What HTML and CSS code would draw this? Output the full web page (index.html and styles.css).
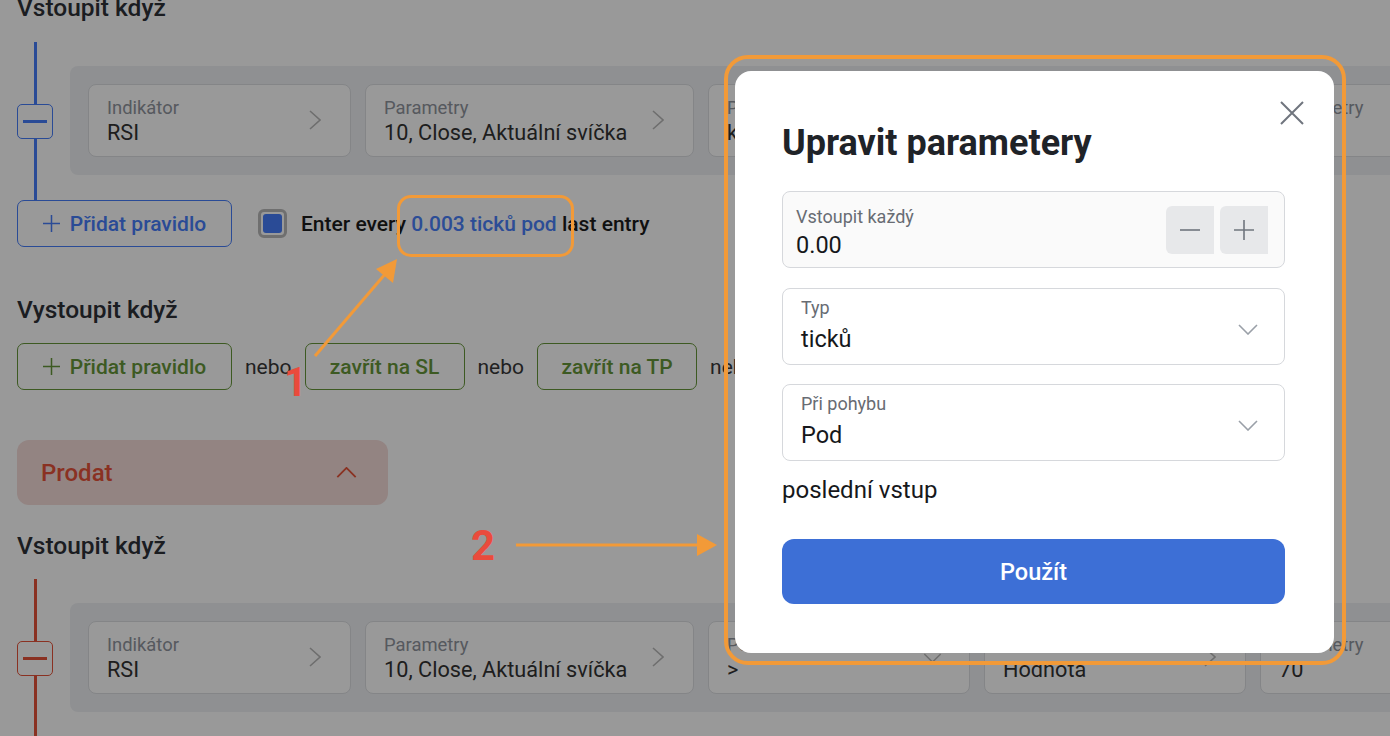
FILE: index.html
```html
<!DOCTYPE html>
<html lang="cs">
<head>
<meta charset="utf-8">
<title>Upravit parametery</title>
<link rel="stylesheet" href="styles.css">
</head>
<body>
<main class="page">
  <h2 class="heading heading--first">Vstoupit když</h2>
  <div class="tree tree--buy">
    <div class="rail"><span class="rail-line"></span><span class="rail-toggle"><span class="rail-minus"></span></span><span class="rail-line"></span></div>
    <div class="rule-wrap">
      <div class="rule-card">
        <div class="field-box field-box--w263"><div class="field-text"><span class="field-label">Indikátor</span><span class="field-value">RSI</span></div><svg class="chev-r" viewBox="0 0 12 20"><path d="M1 1l10 9-10 9"/></svg></div>
        <div class="field-box field-box--w329"><div class="field-text"><span class="field-label">Parametry</span><span class="field-value">10, Close, Aktuální svíčka</span></div><svg class="chev-r" viewBox="0 0 12 20"><path d="M1 1l10 9-10 9"/></svg></div>
        <div class="field-box field-box--w262"><div class="field-text"><span class="field-label">Porovnání</span><span class="field-value">kříží dolů</span></div><svg class="chev-d" viewBox="0 0 20 11"><path d="M1 1l9 9 9-9"/></svg></div>
        <div class="field-box field-box--w262"><div class="field-text"><span class="field-label">Porovnat s</span><span class="field-value">Hodnota</span></div><svg class="chev-r" viewBox="0 0 12 20"><path d="M1 1l10 9-10 9"/></svg></div>
        <div class="field-box field-box--w262"><div class="field-text"><span class="field-label">Parametry</span><span class="field-value">30</span></div><svg class="chev-r" viewBox="0 0 12 20"><path d="M1 1l10 9-10 9"/></svg></div>
      </div>
    </div>
  </div>
  <div class="add-row">
    <button class="add-btn add-btn--blue"><svg class="plus" viewBox="0 0 18 18"><path d="M9 0v18M0 9h18"/></svg>Přidat pravidlo</button>
    <div class="check">
      <span class="check-box"><span class="check-fill"></span></span>
      <span class="check-text">Enter every <span class="check-link">0.003 ticků pod</span> last entry</span>
    </div>
  </div>

  <h2 class="heading heading--exit">Vystoupit když</h2>
  <div class="exit-row">
    <button class="add-btn add-btn--green"><svg class="plus" viewBox="0 0 18 18"><path d="M9 0v18M0 9h18"/></svg>Přidat pravidlo</button>
    <span class="or">nebo</span>
    <button class="close-btn">zavřít na SL</button>
    <span class="or">nebo</span>
    <button class="close-btn">zavřít na TP</button>
    <span class="or">nebo</span>
  </div>

  <div class="side-bar"><span>Prodat</span><svg class="chev-u" viewBox="0 0 22 12"><path d="M1 11l10-10 10 10"/></svg></div>

  <h2 class="heading heading--sell">Vstoupit když</h2>
  <div class="tree tree--sell">
    <div class="rail"><span class="rail-line"></span><span class="rail-toggle"><span class="rail-minus"></span></span><span class="rail-line"></span></div>
    <div class="rule-wrap">
      <div class="rule-card">
        <div class="field-box field-box--w263"><div class="field-text"><span class="field-label">Indikátor</span><span class="field-value">RSI</span></div><svg class="chev-r" viewBox="0 0 12 20"><path d="M1 1l10 9-10 9"/></svg></div>
        <div class="field-box field-box--w329"><div class="field-text"><span class="field-label">Parametry</span><span class="field-value">10, Close, Aktuální svíčka</span></div><svg class="chev-r" viewBox="0 0 12 20"><path d="M1 1l10 9-10 9"/></svg></div>
        <div class="field-box field-box--w262"><div class="field-text"><span class="field-label">Porovnání</span><span class="field-value">&gt;</span></div><svg class="chev-d" viewBox="0 0 20 11"><path d="M1 1l9 9 9-9"/></svg></div>
        <div class="field-box field-box--w262"><div class="field-text"><span class="field-label">Porovnat s</span><span class="field-value">Hodnota</span></div><svg class="chev-r" viewBox="0 0 12 20"><path d="M1 1l10 9-10 9"/></svg></div>
        <div class="field-box field-box--w262"><div class="field-text"><span class="field-label">Parametry</span><span class="field-value">70</span></div><svg class="chev-r" viewBox="0 0 12 20"><path d="M1 1l10 9-10 9"/></svg></div>
      </div>
    </div>
  </div>
</main>

<div class="backdrop"></div>

<div class="annotations">
  <div class="highlight"></div>
  <svg class="arrows" viewBox="0 0 1390 736">
    <line x1="315" y1="356" x2="386" y2="273"/>
    <polygon points="397,259 376,269 393,283"/>
    <line x1="516" y1="545" x2="700" y2="545"/>
    <polygon points="697,534 717,545 697,556"/>
  </svg>
  <span class="step step--one">1</span>
  <span class="step step--two">2</span>
  <div class="modal-frame"></div>
</div>

<section class="modal">
  <svg class="modal-close" viewBox="0 0 24 24"><path d="M1 1l22 22M23 1L1 23"/></svg>
  <h1 class="modal-title">Upravit parametery</h1>
  <div class="mfield mfield--number">
    <div class="mfield-text mfield-text--number">
      <span class="mfield-label">Vstoupit každý</span>
      <span class="mfield-value">0.00</span>
    </div>
    <div class="stepper">
      <span class="step-btn"><svg viewBox="0 0 20 20"><path d="M0 10h20"/></svg></span>
      <span class="step-btn"><svg viewBox="0 0 20 20"><path d="M0 10h20M10 0v20"/></svg></span>
    </div>
  </div>
  <div class="mfield mfield--select mfield--gap20">
    <div class="mfield-text mfield-text--select">
      <span class="mfield-label">Typ</span>
      <span class="mfield-value">ticků</span>
    </div>
    <svg class="mchev" viewBox="0 0 20 11"><path d="M1 1l9 9 9-9"/></svg>
  </div>
  <div class="mfield mfield--select mfield--gap19">
    <div class="mfield-text mfield-text--select">
      <span class="mfield-label">Při pohybu</span>
      <span class="mfield-value">Pod</span>
    </div>
    <svg class="mchev" viewBox="0 0 20 11"><path d="M1 1l9 9 9-9"/></svg>
  </div>
  <p class="modal-note">poslední vstup</p>
  <button class="modal-submit">Použít</button>
</section>
</body>
</html>
```

FILE: styles.css
```css
* { box-sizing: border-box; margin: 0; padding: 0; }

html, body {
  width: 1390px;
  height: 736px;
  overflow: hidden;
}

body {
  position: relative;
  font-family: Roboto, "Noto Sans", "Liberation Sans", sans-serif;
  background: #ffffff;
  color: #2e3137;
}

button { font-family: inherit; cursor: pointer; }

.page {
  padding-left: 17px;
  width: 1390px;
  overflow: hidden;
}

.heading {
  font-size: 24.5px;
  line-height: 26px;
  font-weight: 500;
  color: #2e3137;
}
.heading--first { margin-top: -5px; }
.heading--exit { margin-top: 50px; }
.heading--sell { margin-top: 28px; }

/* rule tree */
.tree {
  display: grid;
  grid-template-columns: 36px auto;
  column-gap: 17px;
  margin-top: 21px;
}
.tree--buy { --accent: #467dfa; }
.tree--sell { --accent: #e65339; margin-top: 20px; }

.rail {
  display: flex;
  flex-direction: column;
  align-items: center;
}
.rail-line {
  flex: 1;
  width: 3px;
  background: var(--accent);
}
.rail-toggle {
  width: 36px;
  height: 35px;
  flex: none;
  border: 1px solid var(--accent);
  border-radius: 5px;
  background: #fff;
  display: flex;
  align-items: center;
  justify-content: center;
}
.rail-minus {
  width: 24px;
  height: 3px;
  background: var(--accent);
}

.rule-wrap { padding: 24px 0 25px; }
.rule-card {
  display: flex;
  gap: 14px;
  padding: 18px;
  width: max-content;
  background: #eff1f4;
  border-radius: 8px;
}

.field-box {
  height: 73px;
  flex: none;
  border: 1px solid #dcdee2;
  border-radius: 8px;
  background: #fff;
  padding: 0 29px 0 18px;
  display: flex;
  align-items: center;
  justify-content: space-between;
}
.field-box--w263 { width: 263px; }
.field-box--w329 { width: 329px; }
.field-box--w262 { width: 262px; }

.field-text { display: flex; flex-direction: column; padding-top: 1px; }
.field-label {
  font-size: 18.4px;
  line-height: 22px;
  color: #8f949d;
}
.field-value {
  font-size: 21.7px;
  line-height: 26px;
  color: #333333;
  margin-top: 1px;
}

.chev-r { width: 12px; height: 20px; margin-top: -2px; }
.chev-r path, .chev-d path {
  fill: none;
  stroke: #b8b8b8;
  stroke-width: 1.6;
}
.chev-d { width: 19px; height: 10px; margin-right: -2px; }

/* add row */
.add-row {
  display: flex;
  align-items: center;
}
.add-btn {
  width: 215px;
  height: 47px;
  flex: none;
  border: 1px solid currentColor;
  border-radius: 7px;
  background: #fff;
  display: flex;
  align-items: center;
  justify-content: center;
  gap: 10px;
  font-size: 21px;
  font-weight: 500;
}
.add-btn--blue { color: #467dfa; }
.add-btn--green { color: #669639; }
.plus { width: 17px; height: 17px; }
.plus path { fill: none; stroke: currentColor; stroke-width: 1.6; }

.check {
  display: flex;
  align-items: center;
  margin-left: 26px;
}
.check-box {
  width: 29px;
  height: 29px;
  border: 3px solid #b9b9b9;
  border-radius: 6px;
  padding: 2px;
  display: flex;
}
.check-fill {
  flex: 1;
  background: #467dfa;
  border-radius: 3px;
}
.check-text {
  margin-left: 14px;
  font-size: 21px;
  font-weight: 500;
  color: #1c1c1c;
}
.check-link { color: #4a80fa; }

/* exit row */
.exit-row {
  display: flex;
  align-items: center;
  gap: 13px;
  margin-top: 20px;
}
.or {
  font-size: 21px;
  color: #383838;
}
.close-btn {
  width: 160px;
  height: 47px;
  flex: none;
  border: 1px solid #669639;
  border-radius: 7px;
  background: #fff;
  color: #669639;
  font-size: 21px;
  font-weight: 500;
}

/* sell bar */
.side-bar {
  width: 371px;
  height: 65px;
  margin-top: 50px;
  border-radius: 12px;
  background: #f5dcd9;
  color: #e65339;
  display: flex;
  align-items: center;
  justify-content: space-between;
  padding: 0 31px 0 24px;
  font-size: 24px;
  font-weight: 500;
}
.chev-u { width: 21px; height: 11px; }
.chev-u path { fill: none; stroke: #e65339; stroke-width: 2; }

/* dim layer */
.backdrop {
  position: absolute;
  inset: 0;
  background: rgba(0, 0, 0, 0.4);
}

/* annotations */
.annotations {
  position: absolute;
  inset: 0;
  pointer-events: none;
}
.highlight {
  position: absolute;
  left: 397px;
  top: 195px;
  width: 177px;
  height: 62px;
  border: 3px solid #f29a38;
  border-radius: 14px;
}
.arrows {
  position: absolute;
  inset: 0;
  width: 1390px;
  height: 736px;
}
.arrows line { stroke: #f29a38; stroke-width: 3; }
.arrows polygon { fill: #f29a38; }

.step {
  position: absolute;
  font-weight: 700;
  color: #ea4b3c;
}
.step--one { left: 284px; top: 363px; font-size: 40px; line-height: 40px; }
.step--two { left: 471px; top: 525px; font-size: 42px; line-height: 42px; }

.modal-frame {
  position: absolute;
  left: 724px;
  top: 55px;
  width: 622px;
  height: 610px;
  border: 4px solid #f29a38;
  border-radius: 24px;
}

/* modal */
.modal {
  position: absolute;
  left: 735px;
  top: 71px;
  width: 599px;
  height: 582px;
  background: #fff;
  border-radius: 16px;
  padding: 50px 49px 0 47px;
}
.modal-close {
  position: absolute;
  right: 30px;
  top: 30px;
  width: 24px;
  height: 24px;
}
.modal-close path { fill: none; stroke: #70757e; stroke-width: 2; }

.modal-title {
  font-size: 36px;
  line-height: 44px;
  font-weight: 700;
  color: #1f2328;
}

.mfield {
  height: 77px;
  border: 1px solid #d6d8dc;
  border-radius: 8px;
  display: flex;
  align-items: center;
}
.mfield--number {
  margin-top: 26px;
  background: #fafafa;
  padding: 0 16px 0 13px;
  justify-content: space-between;
}
.mfield--select {
  background: #fff;
  padding: 0 26px 0 18px;
  justify-content: space-between;
}
.mfield--gap20 { margin-top: 20px; }
.mfield--gap19 { margin-top: 19px; }

.mfield-text {
  align-self: flex-start;
  display: flex;
  flex-direction: column;
}
.mfield-text--number { padding-top: 14px; gap: 3px; }
.mfield-text--select { padding-top: 8px; gap: 6px; }

.mfield-label {
  font-size: 18px;
  line-height: 22px;
  color: #686c73;
}
.mfield-value {
  font-size: 23.5px;
  line-height: 28px;
  color: #16181b;
}

.stepper { display: flex; gap: 6px; }
.step-btn {
  width: 48px;
  height: 48px;
  background: #e7e8ea;
  border-radius: 6px 0 0 6px;
  display: flex;
  align-items: center;
  justify-content: center;
}
.step-btn svg { width: 20px; height: 20px; }
.step-btn path { fill: none; stroke: #70757e; stroke-width: 1.6; }

.mchev { width: 20px; height: 11px; margin-top: 5px; }
.mchev path { fill: none; stroke: #9aa0a8; stroke-width: 1.6; }

.modal-note {
  margin-top: 15px;
  font-size: 24px;
  line-height: 28px;
  color: #16181b;
}

.modal-submit {
  display: block;
  width: 100%;
  height: 65px;
  margin-top: 35px;
  border: none;
  border-radius: 12px;
  background: #3d6fd6;
  color: #fff;
  font-size: 23.5px;
  font-weight: 500;
}
```
